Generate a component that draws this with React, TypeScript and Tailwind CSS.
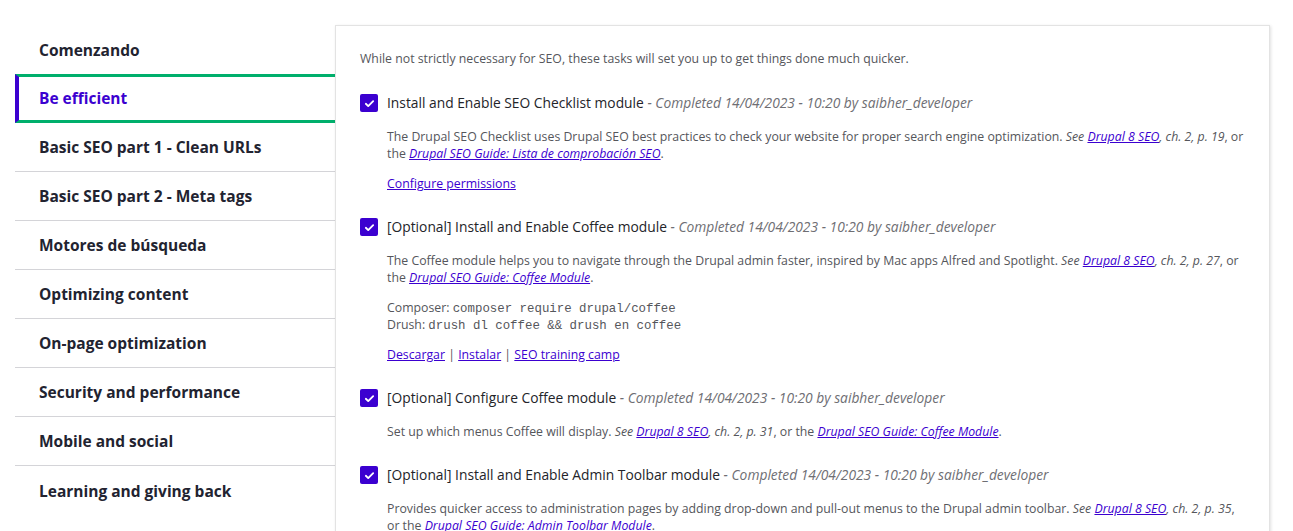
import React from "react";

const NAV = [
  "Comenzando",
  "Be efficient",
  "Basic SEO part 1 - Clean URLs",
  "Basic SEO part 2 - Meta tags",
  "Motores de búsqueda",
  "Optimizing content",
  "On-page optimization",
  "Security and performance",
  "Mobile and social",
  "Learning and giving back",
];

const FONT = { fontFamily: '"Open Sans", "Noto Sans", sans-serif' };

function Check() {
  return (
    <span className="mt-[1px] flex h-[18px] w-[18px] shrink-0 items-center justify-center rounded-[2px] bg-[#3b00d0]">
      <svg viewBox="0 0 12 12" className="h-[11px] w-[11px]" fill="none">
        <path d="M2 6.3l2.6 2.5L10 3.4" stroke="white" strokeWidth="2" strokeLinecap="round" strokeLinejoin="round" />
      </svg>
    </span>
  );
}

function A({ children }: { children: React.ReactNode }) {
  return <a className="text-[#3b00d0] underline">{children}</a>;
}

function Task({ title, children }: { title: string; children: React.ReactNode }) {
  return (
    <div className="mb-[25px]">
      <div className="flex items-start gap-[9px]">
        <Check />
        <div className="text-[13.8px] leading-[20px] text-[#232429]">
          {title}{" "}
          <span className="italic text-[#6e6e73]">- Completed 14/04/2023 - 10:20 by saibher_developer</span>
        </div>
      </div>
      <div className="mt-[15px] space-y-[13px] pl-[27px] text-[12.3px] leading-[17px] text-[#55565b]">{children}</div>
    </div>
  );
}

const MONO = "font-['Liberation_Mono',monospace] text-[12.4px] leading-none";

export default function App() {
  return (
    <div style={FONT} className="flex min-h-[531px] bg-white pl-[15px] pr-[23px] pt-[25px]">
      <nav className="w-[320px] shrink-0">
        {NAV.map((label, i) =>
          i === 1 ? (
            <div
              key={label}
              className="flex h-[49px] items-center border-y-[3px] border-l-4 border-y-[#00af6c] border-l-[#3b00d0] pl-5 pt-[1px] text-[15.5px] font-bold text-[#3b00d0]"
            >
              {label}
            </div>
          ) : (
            <div
              key={label}
              className={
                "flex h-[49px] items-center pl-6 pt-[2px] text-[15.5px] font-bold text-[#222330] " +
                (i === 0 || i === 9 ? "" : "border-b border-[#d4d4d8]")
              }
            >
              {label}
            </div>
          )
        )}
      </nav>
      <main className="min-w-0 flex-1 border border-[#e3e3e3] bg-white px-6 pt-6 shadow-[1px_1px_3px_rgba(0,0,0,0.12)]">
        <p className="mb-[26px] text-[12.3px] leading-[17px] text-[#55565b]">
          While not strictly necessary for SEO, these tasks will set you up to get things done much quicker.
        </p>

        <Task title="Install and Enable SEO Checklist module">
          <p>
            The Drupal SEO Checklist uses Drupal SEO best practices to check your website for proper search engine
            optimization. <i>See</i> <A><i>Drupal 8 SEO</i></A>
            <i>, ch. 2, p. 19</i>, or the <A><i>Drupal SEO Guide: Lista de comprobación SEO</i></A>.
          </p>
          <p>
            <A>Configure permissions</A>
          </p>
        </Task>

        <Task title="[Optional] Install and Enable Coffee module">
          <p>
            The Coffee module helps you to navigate through the Drupal admin faster, inspired by Mac apps Alfred and
            Spotlight. <i>See</i> <A><i>Drupal 8 SEO</i></A>
            <i>, ch. 2, p. 27</i>, or the <A><i>Drupal SEO Guide: Coffee Module</i></A>.
          </p>
          <div>
            <div className="h-[17px]">
              Composer: <code className={MONO}>composer require drupal/coffee</code>
            </div>
            <div className="h-[17px]">
              Drush: <code className={MONO}>drush dl coffee &amp;&amp; drush en coffee</code>
            </div>
          </div>
          <p>
            <A>Descargar</A> | <A>Instalar</A> | <A>SEO training camp</A>
          </p>
        </Task>

        <Task title="[Optional] Configure Coffee module">
          <p>
            Set up which menus Coffee will display. <i>See</i> <A><i>Drupal 8 SEO</i></A>
            <i>, ch. 2, p. 31</i>, or the <A><i>Drupal SEO Guide: Coffee Module</i></A>.
          </p>
        </Task>

        <Task title="[Optional] Install and Enable Admin Toolbar module">
          <p>
            Provides quicker access to administration pages by adding drop-down and pull-out menus to the Drupal admin
            toolbar. <i>See</i> <A><i>Drupal 8 SEO</i></A>
            <i>, ch. 2, p. 35</i>, or the <A><i>Drupal SEO Guide: Admin Toolbar Module</i></A>.
          </p>
        </Task>
      </main>
    </div>
  );
}
